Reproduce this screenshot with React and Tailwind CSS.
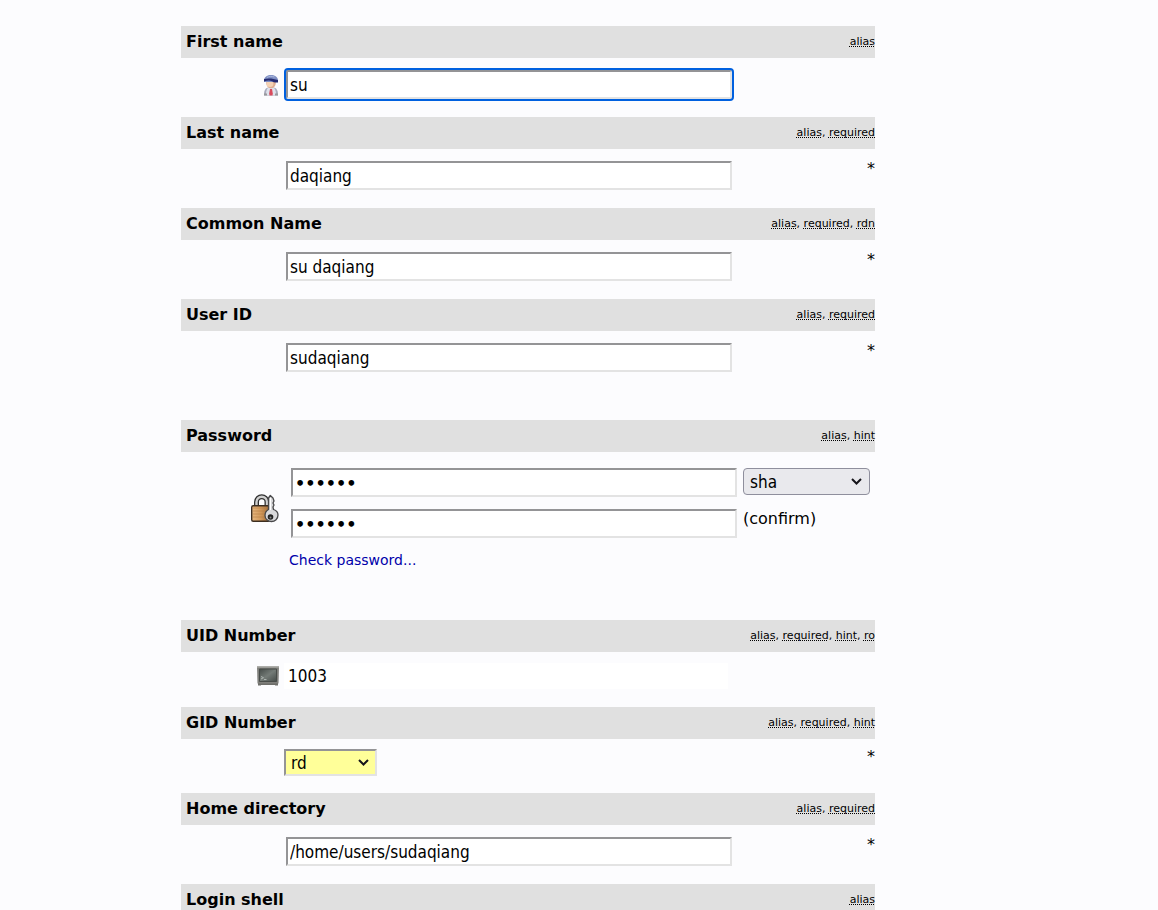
import { clsx } from "clsx"

const fieldFont = "font-['DejaVu_Sans_Condensed','DejaVu_Sans',sans-serif] text-[17px] leading-5"
const inset = "border-2 border-t-[#949496] border-l-[#949496] border-r-[#e3e3e3] border-b-[#e3e3e3]"
const inputStyle = clsx("block h-[29px] w-full rounded-none bg-white px-0.5 text-black", inset)

function UserIcon() {
  return (
    <svg width="16" height="22" viewBox="0 0 16 22" aria-hidden="true">
      <path d="M1 21.500c0-4 .5-7 4-8h6c3.500 1 4 4 4 8z" fill="#a9abbd" />
      <path d="M3 21c0-3 .3-5 1.800-7h6.400c1.500 2 1.800 4 1.800 7z" fill="#dfe2ec" />
      <path d="M1 19.500h3v2H1zM12 19.500h3v2h-3z" fill="#99999c" />
      <path d="M7 15h2l.8 4.500-.3 2h-3l-.3-2z" fill="#d94a5c" />
      <ellipse cx="8" cy="9" rx="4.800" ry="5.200" fill="#dfae92" />
      <ellipse cx="7" cy="10" rx="3.400" ry="3" fill="#f5d2b4" />
      <path d="M1 6C1.500 2.500 4.500 1 8 1s6.500 1.500 7 5v2H1z" fill="#7f8fc4" />
      <path d="M1 5c5-1 9-.5 14 1v2.500c-3 .3-4.500-.2-6-1.200C6.500 6 4 6.500 1 7.500z" fill="#252c72" />
      <path d="M4 3.500c2-1.300 5-1.500 7.500-.5" stroke="#aab8dc" fill="none" />
    </svg>
  )
}

function LockIcon() {
  return (
    <svg width="30" height="30" viewBox="0 0 30 30" aria-hidden="true">
      <defs>
        <linearGradient id="brass" x1="0" x2="1">
          <stop offset="0" stopColor="#e9b981" />
          <stop offset=".5" stopColor="#d39a5c" />
          <stop offset="1" stopColor="#9c6a38" />
        </linearGradient>
      </defs>
      <path d="M6.500 13V8c0-7 10.500-7 10.500 0v5" fill="none" stroke="#303030" strokeWidth="5" />
      <path d="M6.500 13V8c0-7 10.500-7 10.500 0v5" fill="none" stroke="#cfcfcf" strokeWidth="2.400" />
      <rect x="1.700" y="11.700" width="18" height="15.500" rx="1.500" fill="url(#brass)" stroke="#3c2d20" strokeWidth="1.400" />
      <path d="M3 14h15M3 17h15M3 20h11M3 23h11" stroke="#b57d45" strokeOpacity=".6" />
      <path
        d="M18.500 4l1.800-2.500L23 4l1 3-1 2 1 2-1 2 .5 2.500c3 1 4.500 3 4.500 5.500 0 4-3 6.500-6.500 6.500S15 25 15 21.500c0-3 1.500-5 3.500-6z"
        fill="#d9d9db"
        stroke="#48484a"
        strokeWidth="1.300"
        strokeLinejoin="round"
      />
      <path d="M20.500 4v12" stroke="#fff" />
      <circle cx="20.500" cy="23" r="2.800" fill="#222" />
      <circle cx="20.500" cy="23.500" r="1" fill="#888" />
    </svg>
  )
}

function TerminalIcon() {
  return (
    <svg width="24" height="22" viewBox="0 0 24 22" aria-hidden="true">
      <defs>
        <linearGradient id="screen" x1="0" y1="0" x2="1" y2="1">
          <stop offset="0" stopColor="#454b48" />
          <stop offset=".5" stopColor="#747b77" />
          <stop offset="1" stopColor="#454b48" />
        </linearGradient>
      </defs>
      <path d="M2 18h20v2.500h-3V20H5v.5H2z" fill="#6e6e6a" />
      <path d="M1 1.500h22l-.5 17h-21z" fill="#7f7f7b" />
      <path d="M1 1.500h22v1.500H1z" fill="#9c9c97" />
      <path d="M3.500 4h17v12.500h-17z" fill="url(#screen)" stroke="#484c49" />
      <path d="M5 11.500l2.500 1.200L5 14M8 14.500h2.500" stroke="#aeb5b1" fill="none" />
    </svg>
  )
}

function Chevron() {
  return (
    <svg className="pointer-events-none absolute right-2 top-2.5" width="11" height="8" viewBox="0 0 11 8" aria-hidden="true">
      <path d="M1 1l4.500 4.500L10 1" fill="none" stroke="#15141a" strokeWidth="2" />
    </svg>
  )
}

function Section({ id, title, notes, className, children }) {
  return (
    <section className={clsx("flex flex-col", className)}>
      <div className="flex h-8 items-center justify-between bg-[#e0e0e0] pl-[5px]">
        <label htmlFor={id} className="text-base font-bold">{title}</label>
        <span className="text-[11px]">
          {notes.map((note, i) => (
            <span key={note}>
              {i > 0 && ", "}
              <abbr className="underline decoration-dotted decoration-1 underline-offset-1 [text-decoration-skip-ink:none]">{note}</abbr>
            </span>
          ))}
        </span>
      </div>
      {children}
    </section>
  )
}

function Row({ icon, required, children }) {
  return (
    <div className="grid grid-cols-[105px_minmax(0,446px)_1fr] pt-3">
      <div className="flex h-[29px] items-center justify-end pr-[7px]">{icon}</div>
      <div>{children}</div>
      {required && <span className="text-right text-base leading-4">*</span>}
    </div>
  )
}

function TextSection({ id, title, notes, value, icon, focused, className = "h-[91px]" }) {
  return (
    <Section id={id} title={title} notes={notes} className={className}>
      <Row icon={icon} required={notes.includes("required")}>
        <input
          id={id}
          type="text"
          defaultValue={value}
          className={clsx(inputStyle, fieldFont, focused && "rounded-xs outline-2 outline-[#0060df]")}
        />
      </Row>
    </Section>
  )
}

function PasswordInput({ id }) {
  return (
    <div className="h-[41px]">
      <input
        id={id}
        type="password"
        defaultValue="secret"
        className={clsx(inputStyle, "pt-0.5 font-['DejaVu_Sans',sans-serif] text-base font-bold")}
      />
    </div>
  )
}

export default function App() {
  return (
    <main className="min-h-screen bg-[#fcfcfe] pl-[181px] pr-[283px] pt-[26px] font-['DejaVu_Sans',sans-serif] text-black">
      <form>
        <TextSection id="givenname" title="First name" notes={["alias"]} value="su" icon={<UserIcon />} focused />
        <TextSection id="sn" title="Last name" notes={["alias", "required"]} value="daqiang" />
        <TextSection id="cn" title="Common Name" notes={["alias", "required", "rdn"]} value="su daqiang" />
        <TextSection id="uid" title="User ID" notes={["alias", "required"]} value="sudaqiang" className="h-[121px]" />

        <Section id="password" title="Password" notes={["alias", "hint"]} className="h-[200px]">
          <div className="grid grid-cols-[110px_minmax(0,446px)_1fr] pt-4">
            <div className="row-span-2 flex items-center justify-end pr-[11px]">
              <LockIcon />
            </div>
            <PasswordInput id="password" />
            <div className="relative ml-1.5 mr-[5px] h-[27px]">
              <select
                aria-label="Encryption"
                defaultValue="sha"
                className={clsx("h-full w-full appearance-none rounded-sm border border-[#8f8f9d] bg-[#e9e9ed] px-1.5", fieldFont)}
              >
                <option>sha</option>
                <option>md5</option>
                <option>clear</option>
              </select>
              <Chevron />
            </div>
            <PasswordInput id="confirm" />
            <label htmlFor="confirm" className="ml-1.5 text-base leading-5">(confirm)</label>
          </div>
          <a href="#check" className="ml-[108px] self-start text-sm text-[#0000aa]">Check password...</a>
        </Section>

        <Section id="uidnumber" title="UID Number" notes={["alias", "required", "hint", "ro"]} className="h-[87px]">
          <div className="grid grid-cols-[103px_minmax(0,444px)_1fr] pt-[11px]">
            <div className="flex items-center justify-end pr-1">
              <TerminalIcon />
            </div>
            <input
              id="uidnumber"
              type="text"
              readOnly
              defaultValue="1003"
              className={clsx("h-[26px] bg-white px-1", fieldFont)}
            />
          </div>
        </Section>

        <Section id="gidnumber" title="GID Number" notes={["alias", "required", "hint"]} className="h-[86px]">
          <div className="flex items-start justify-between pl-[103px] pt-2.5">
            <div className="relative h-[27px] w-[93px]">
              <select
                id="gidnumber"
                defaultValue="rd"
                className={clsx("h-full w-full appearance-none bg-[#ffff99] px-[5px]", inset, fieldFont)}
              >
                <option>rd</option>
                <option>users</option>
              </select>
              <Chevron />
            </div>
            <span className="text-base leading-4">*</span>
          </div>
        </Section>

        <TextSection id="homedirectory" title="Home directory" notes={["alias", "required"]} value="/home/users/sudaqiang" />
        <TextSection id="loginshell" title="Login shell" notes={["alias"]} value="" />
      </form>
    </main>
  )
}
